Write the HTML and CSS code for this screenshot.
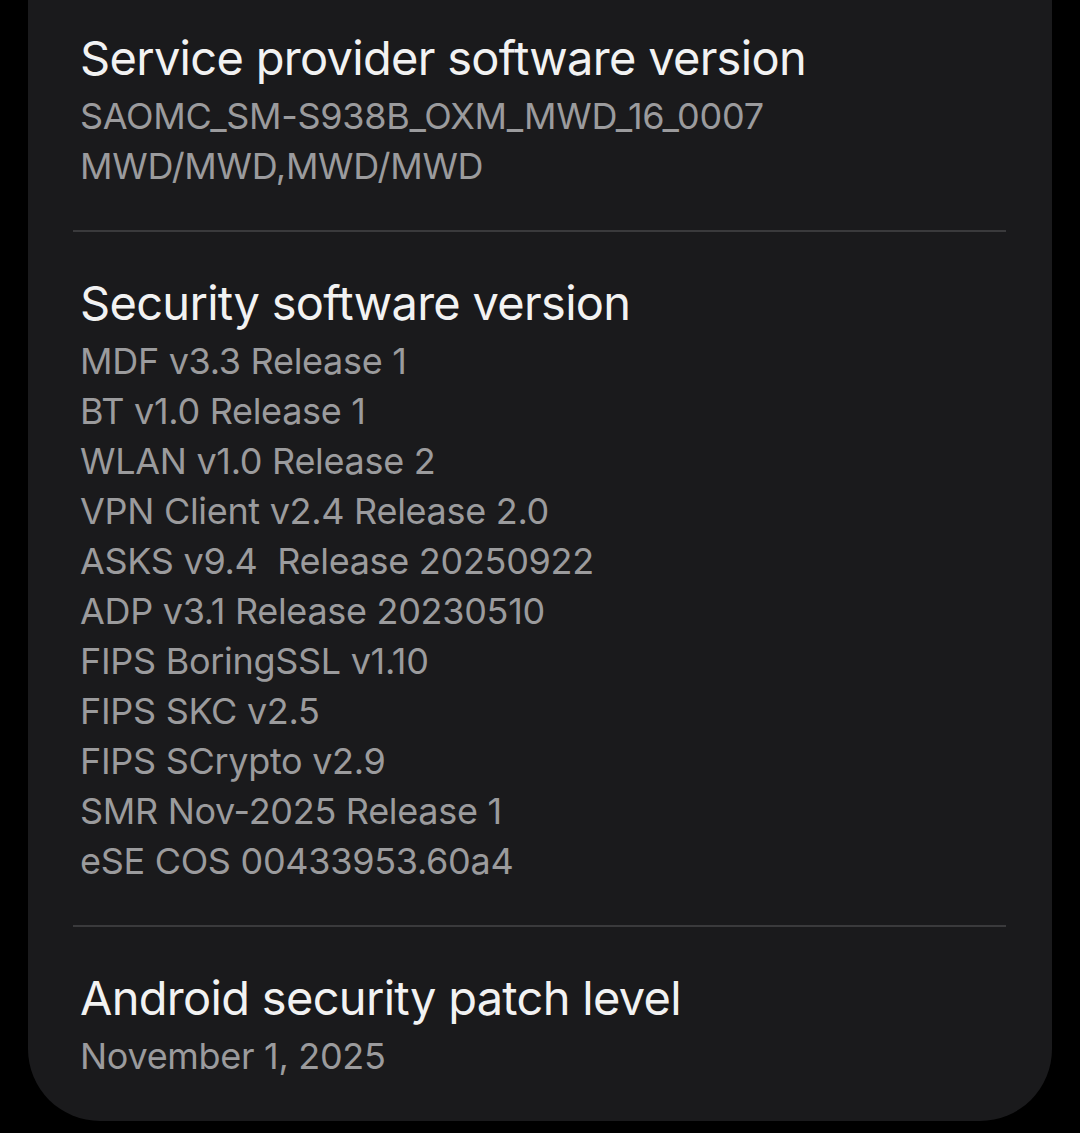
FILE: index.html
```html
<!DOCTYPE html>
<html lang="en">
<head>
  <meta charset="UTF-8">
  <meta name="viewport" content="width=device-width, initial-scale=1.0">
  <title>Software information</title>
  <link rel="stylesheet" href="styles.css">
</head>
<body>
  <div class="card">
    <div class="item first">
      <div class="item-title">Service provider software version</div>
      <div class="item-value">SAOMC_SM-S938B_OXM_MWD_16_0007</div>
      <div class="item-value">MWD/MWD,MWD/MWD</div>
    </div>
    <div class="divider"></div>
    <div class="item">
      <div class="item-title">Security software version</div>
      <div class="item-value">MDF v3.3 Release 1</div>
      <div class="item-value">BT v1.0 Release 1</div>
      <div class="item-value">WLAN v1.0 Release 2</div>
      <div class="item-value">VPN Client v2.4 Release 2.0</div>
      <div class="item-value">ASKS v9.4&nbsp; Release 20250922</div>
      <div class="item-value">ADP v3.1 Release 20230510</div>
      <div class="item-value">FIPS BoringSSL v1.10</div>
      <div class="item-value">FIPS SKC v2.5</div>
      <div class="item-value">FIPS SCrypto v2.9</div>
      <div class="item-value">SMR Nov-2025 Release 1</div>
      <div class="item-value">eSE COS 00433953.60a4</div>
    </div>
    <div class="divider"></div>
    <div class="item">
      <div class="item-title">Android security patch level</div>
      <div class="item-value">November 1, 2025</div>
    </div>
  </div>
</body>
</html>
```

FILE: styles.css
```css
body {
  margin: 0;
  background-color: #000;
  font-family: Inter, Roboto, sans-serif;
}
.card {
  margin: 0 28px;
  height: 1121px;
  box-sizing: border-box;
  background-color: #1a1a1c;
  border-radius: 0 0 72px 72px;
}
.item {
  padding: 43px 52px 39px 52px;
}
.item.first {
  padding-top: 30px;
}
.item-title {
  color: #f2f2f2;
  font-size: 47px;
  line-height: 56px;
  letter-spacing: -0.7px;
  margin-bottom: 5px;
}
.item-value {
  color: #9b9b9d;
  font-size: 36px;
  line-height: 50px;
  letter-spacing: -0.3px;
}
.divider {
  height: 2px;
  margin: 0 46px 0 45px;
  background-color: #3a3a3c;
}
```
